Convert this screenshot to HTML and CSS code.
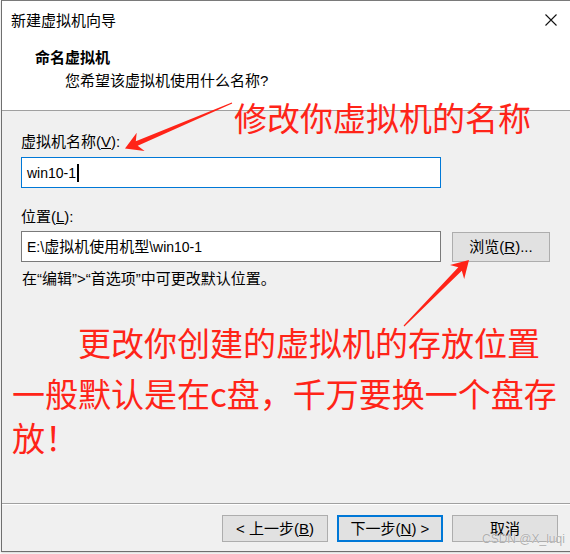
FILE: index.html
```html
<!DOCTYPE html>
<html lang="zh-CN">
<head>
<meta charset="utf-8">
<title>新建虚拟机向导</title>
<link rel="stylesheet" href="styles.css">
</head>
<body>
<div class="window">
  <div class="top">
    <div class="titlebar">
      <span class="title">新建虚拟机向导</span>
      <svg class="close" width="12" height="12" viewBox="0 0 12 12"><path d="M0.5 0.5 L11.5 11.5 M11.5 0.5 L0.5 11.5" stroke="#111" stroke-width="1.1" fill="none"/></svg>
    </div>
    <div class="header">
      <div class="h-title">命名虚拟机</div>
      <div class="h-sub">您希望该虚拟机使用什么名称?</div>
    </div>
  </div>
  <div class="content">
    <div class="label">虚拟机名称(<u>V</u>):</div>
    <div class="field focused"><span class="lat">win10-1</span><span class="caret"></span></div>
    <div class="label label-loc">位置(<u>L</u>):</div>
    <div class="row">
      <div class="field"><span class="lat">E:\</span>虚拟机使用机型<span class="lat">\win10-1</span></div>
      <button class="btn browse">浏览(<u>R</u>)...</button>
    </div>
    <div class="hint">在“编辑”&gt;“首选项”中可更改默认位置。</div>
  </div>
  <div class="footer">
    <button class="btn wiz">&lt; 上一步(<u>B</u>)</button>
    <button class="btn wiz primary">下一步(<u>N</u>) &gt;</button>
    <button class="btn wiz">取消</button>
  </div>
</div>

<div class="notes">
  <svg class="arrows" width="570" height="554" viewBox="0 0 570 554">
    <polygon fill="#ff2418" points="231.8,102.4 135.8,141.2 136.7,132.7 125,148.5 144.6,151.1 137.7,145.8 232.2,103.6"/>
    <polygon fill="#ff2418" points="403.6,325.6 458.3,267.3 450.0,265.1 469,260 464.2,279.1 461.8,270.8 404.4,326.4"/>
  </svg>
  <div class="note note-name">修改你虚拟机的名称</div>
  <div class="note note-loc">更改你创建的虚拟机的存放位置</div>
  <div class="note note-warn">一般默认是在c盘，千万要换一个盘存放！</div>
  <div class="watermark">CSDN @X_luqi</div>
</div>
</body>
</html>
```

FILE: styles.css
```css
html, body {
  margin: 0;
  padding: 0;
  background: #ffffff;
}

body {
  width: 570px;
  height: 554px;
  overflow: hidden;
  position: relative;
  font-family: "Liberation Sans", "Noto Sans CJK SC", sans-serif;
  font-size: 15px;
  color: #000;
}

.window {
  box-sizing: border-box;
  margin-left: 1px;
  width: 580px;
  height: 552px;
  border-top: 1px solid #7a7a7a;
  border-left: 1px solid #6f6f6f;
  border-bottom: 1px solid #6f6f6f;
  display: flex;
  flex-direction: column;
  background: #f0f0f0;
  box-shadow: 0 1px 2px rgba(0, 0, 0, 0.18);
}

.top {
  box-sizing: border-box;
  height: 110px;
  background: #fff;
  border-bottom: 1px solid #a0a0a0;
}

.titlebar {
  display: flex;
  align-items: center;
  height: 20px;
  padding: 9px 0 0 9px;
  width: 560px;
  box-sizing: content-box;
}

.title {
  flex: 1;
  line-height: 20px;
  font-family: "Noto Sans CJK SC", sans-serif;
  font-size: 15px;
}

.close {
  display: block;
  margin-right: 14px;
}

.header {
  padding: 17px 0 0 33px;
}

.h-title {
  font-family: "Noto Sans CJK SC", sans-serif;
  font-weight: bold;
  line-height: 20px;
}

.h-sub {
  margin-top: 4px;
  padding-left: 30px;
  line-height: 20px;
}

.content {
  flex: 1;
  padding: 21px 0 0 19px;
}

.label {
  line-height: 20px;
}

.label-loc {
  margin-top: 19px;
}

.field {
  box-sizing: border-box;
  width: 420px;
  height: 31px;
  margin-top: 5px;
  border: 1px solid #7a7a7a;
  background: #fff;
  display: flex;
  align-items: center;
  padding-left: 5px;
  line-height: 20px;
}

.lat {
  font-size: 14px;
}

.field.focused {
  border-color: #0078d7;
}

.caret {
  display: inline-block;
  width: 2px;
  height: 18px;
  background: #000;
  margin-left: 1px;
}

.row {
  display: flex;
  align-items: center;
  gap: 11px;
  margin-top: 4px;
}

.row .field {
  margin-top: 0;
}

.btn {
  box-sizing: border-box;
  border: 1px solid #adadad;
  background: #e1e1e1;
  font-family: "Liberation Sans", "Noto Sans CJK SC", sans-serif;
  font-size: 15px;
  color: #000;
  padding: 0;
  margin: 0;
  line-height: 20px;
}

.browse {
  width: 98px;
  height: 30px;
}

.hint {
  margin-top: 7px;
  line-height: 20px;
  padding-left: 1px;
}

.footer {
  box-sizing: border-box;
  height: 48px;
  border-top: 1px solid #a0a0a0;
  box-shadow: inset 0 1px 0 #ffffff;
  display: flex;
  gap: 9px;
  padding: 11px 0 0 220px;
}

.wiz {
  width: 106px;
  height: 27px;
}

.primary {
  border: 2px solid #0078d7;
}

.notes {
  position: absolute;
  inset: 0;
  pointer-events: none;
}

.arrows {
  position: absolute;
  left: 0;
  top: 0;
}

.note {
  position: absolute;
  font-family: "Noto Sans CJK SC", sans-serif;
  font-size: 33px;
  line-height: 33px;
  color: #ff2418;
  white-space: nowrap;
}

.note-name {
  left: 234px;
  top: 101px;
}

.note-loc {
  left: 78px;
  top: 326px;
}

.note-warn {
  left: 12px;
  top: 371px;
  width: 556px;
  white-space: normal;
  line-height: 44px;
}

.watermark {
  position: absolute;
  left: 482px;
  top: 531px;
  font-family: "Liberation Sans", sans-serif;
  font-size: 12px;
  line-height: 16px;
  color: rgba(160, 160, 160, 0.85);
  text-shadow: 0 0 1px #fff;
}
```
